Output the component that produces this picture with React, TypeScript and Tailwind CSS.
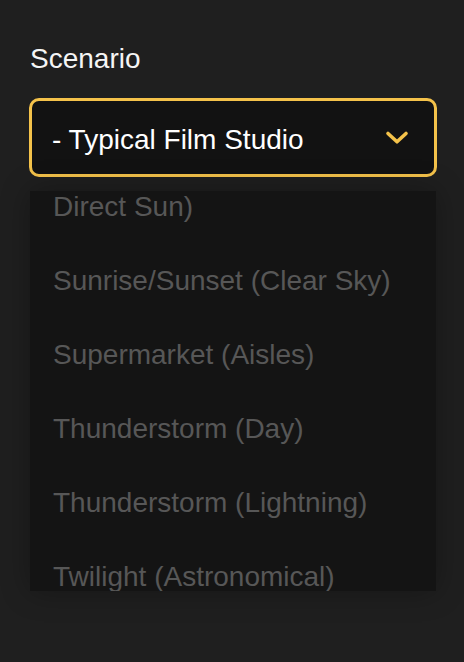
import React from "react";

const options = [
  { label: ["Daylight (Noon,", "Direct Sun)"] },
  { label: ["Sunrise/Sunset (Clear Sky)"] },
  { label: ["Supermarket (Aisles)"] },
  { label: ["Thunderstorm (Day)"] },
  { label: ["Thunderstorm (Lightning)"] },
  { label: ["Twilight (Astronomical)"] },
];

const Chevron = () => (
  <svg width="24" height="15" viewBox="0 0 24 15" fill="none" className="shrink-0">
    <polyline
      points="3,3.5 12,11.8 21,3.5"
      stroke="#f4c24a"
      strokeWidth="3.6"
      strokeLinecap="round"
      strokeLinejoin="round"
    />
  </svg>
);

export default function App() {
  return (
    <div
      className="min-h-screen bg-[#1f1f1f] pl-[29px] pr-[27px] pt-[43px]"
      style={{ fontFamily: '"Liberation Sans", Arial, sans-serif' }}>
      <div className="pl-[1px] text-[28px] leading-[31px] text-[#f5f5f5]">Scenario</div>

      {/* select trigger */}
      <div className="mt-[24px] flex h-[79px] items-center justify-between rounded-[10px] border-[3px] border-[#f4c24a] bg-[#121212] pl-[20px] pr-[25px]">
        <span className="pt-[3px] text-[28px] leading-[31px] text-white">- Typical Film Studio</span>
        <Chevron />
      </div>

      {/* open dropdown list */}
      <div className="mx-[1px] mt-[14px] h-[400px] overflow-hidden bg-[#141414] shadow-[0_0_28px_rgba(0,0,0,0.3)]">
        <div className="-mt-[53px]">
          {options.map((opt) => (
            <div
              key={opt.label.join(" ")}
              className="py-[21.5px] pl-[23px] text-[28px] leading-[31px] text-[#575757]">
              {opt.label.map((line) => (
                <div key={line}>{line}</div>
              ))}
            </div>
          ))}
        </div>
      </div>
    </div>
  );
}
